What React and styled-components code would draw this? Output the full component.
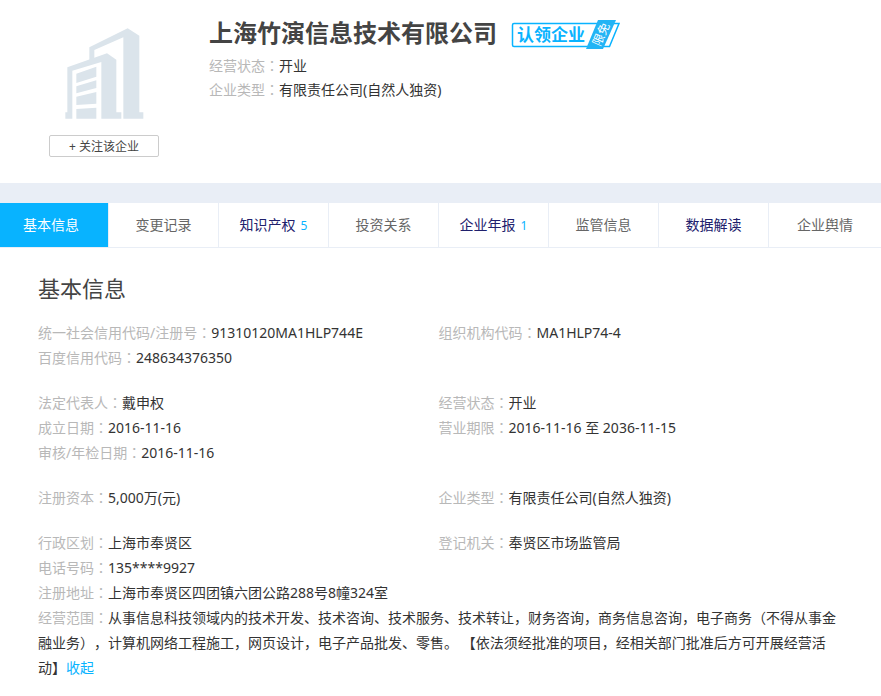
import React from "react";
import styled, { createGlobalStyle } from "styled-components";

const GlobalStyle = createGlobalStyle`
  * { box-sizing: border-box; }
  body {
    margin: 0;
    background: #fff;
    color: #333;
    font: 14px/25px "Noto Sans", "Noto Sans CJK SC", sans-serif;
    text-spacing-trim: space-all;
  }
  h1, h2, p, dl, dd, dt, ul { margin: 0; padding: 0; }
`;

const Header = styled.header`
  display: flex;
  gap: 50px;
  padding: 20px 40px 26px 49px;
`;

const LogoColumn = styled.div`
  display: flex;
  flex-direction: column;
  align-items: center;
  gap: 16px;
  width: 110px;
  padding-top: 8px;
`;

const FollowButton = styled.button`
  width: 100%;
  height: 22px;
  padding: 1px 0 0;
  border: 1px solid #ccc;
  border-radius: 2px;
  background: #fff;
  color: #444;
  font: inherit;
  font-size: 12px;
  line-height: 20px;
  cursor: pointer;
`;

const TitleRow = styled.div`
  display: flex;
  align-items: flex-start;
  gap: 13px;
  height: 30px;
  margin-bottom: 4px;
`;

const CompanyName = styled.h1`
  color: #444;
  font-size: 24px;
  line-height: 26px;
`;

const BadgeLink = styled.a`
  display: block;
  height: 30px;
`;

const Summary = styled.dl`
  line-height: 24px;
`;

const Field = styled.div`
  dt, dd { display: inline; }
`;

const Label = styled.dt`
  color: #b8b8b8;
`;

const Colon = styled.span`
  font-family: "Noto Sans CJK TC", sans-serif;
  line-height: 1;
`;

const Tabs = styled.nav`
  display: grid;
  grid-template-columns: 108fr repeat(6, 110fr) 113fr;
  border-top: 20px solid #e9eef6;
  border-bottom: 1px solid #e9eef6;
`;

const Tab = styled.a`
  height: 44px;
  padding-right: ${(p) => (p.$active ? "6px" : "0")};
  border-left: ${(p) => (p.$active ? "0" : "1px solid #e9eef6")};
  background: ${(p) => (p.$active ? "#08b3ff" : "#fff")};
  color: ${(p) => (p.$active ? "#fff" : p.$visitable ? "#20206c" : "#666")};
  line-height: 44px;
  text-align: center;
  text-decoration: none;
  white-space: nowrap;
`;

const Count = styled.span`
  margin-left: 5px;
  color: #08b3ff;
  font-size: 12px;
`;

const Details = styled.main`
  padding: 24px 42px 16px 38px;
`;

const SectionTitle = styled.h2`
  margin-bottom: 16px;
  color: #444;
  font-size: 22px;
  font-weight: 400;
  line-height: 32px;
`;

const Groups = styled.div`
  display: flex;
  flex-direction: column;
  gap: 20px;
`;

const Group = styled.dl`
  display: grid;
  grid-template-columns: 1fr 1fr;
`;

const Cell = styled(Field)`
  grid-column: ${(p) => (p.$wide ? "1 / -1" : p.$right ? "2" : "1")};
`;

const ToggleButton = styled.button`
  padding: 0;
  border: 0;
  background: none;
  color: #08b3ff;
  font: inherit;
  cursor: pointer;
`;

function BuildingLogo() {
  return (
    <svg width="79" height="91" viewBox="74 37 237 273" fill="#dbe4eb" aria-hidden="true">
      <path d="M147 95 262 38 297 60V290H309V309H249V65L162 103V128L147 134Z" />
      <path d="M75 290H81V155L200 113 228 132V290H243V309H183V139L96 165V309H75Z" />
      <path d="M108 174 168 153V183L108 202ZM108 212 168 194V217L108 233ZM108 243 168 229V264L108 268ZM108 280 168 276V309H108Z" />
    </svg>
  );
}

function ClaimBadge() {
  return (
    <svg width="110" height="30" viewBox="0 0 110 30" overflow="visible" role="img" aria-label="认领企业 限免">
      <path d="M4 3.5H109L99.500 26.500H4Q2.500 26.500 2.500 25V5Q2.500 3.500 4 3.500Z" fill="#fff" stroke="#08b3ff" strokeWidth="1.500" />
      <text x="7" y="21" fill="#08b3ff" fontSize="17" fontWeight="700" fontFamily="Noto Sans CJK SC">认领企业</text>
      <path d="M88 0H106L93 29H76Z" fill="#22b4f5" />
      <text transform="translate(90 27) rotate(-66)" fill="#fff" fontSize="12" fontFamily="Noto Sans CJK SC">限免</text>
    </svg>
  );
}

function Entry({ label, children, ...rest }) {
  return (
    <Cell {...rest}>
      <Label>{label}<Colon>：</Colon></Label>
      <dd>{children}</dd>
    </Cell>
  );
}

const tabs = [
  { name: "基本信息", active: true },
  { name: "变更记录" },
  { name: "知识产权", count: 5, visitable: true },
  { name: "投资关系" },
  { name: "企业年报", count: 1, visitable: true },
  { name: "监管信息" },
  { name: "数据解读", visitable: true },
  { name: "企业舆情" },
];

export default function App() {
  return (
    <>
      <GlobalStyle />
      <Header>
        <LogoColumn>
          <BuildingLogo />
          <FollowButton type="button">+ 关注该企业</FollowButton>
        </LogoColumn>
        <div>
          <TitleRow>
            <CompanyName>上海竹演信息技术有限公司</CompanyName>
            <BadgeLink href="#claim"><ClaimBadge /></BadgeLink>
          </TitleRow>
          <Summary>
            <Entry label="经营状态">开业</Entry>
            <Entry label="企业类型">有限责任公司(自然人独资)</Entry>
          </Summary>
        </div>
      </Header>
      <Tabs>
        {tabs.map((t) => (
          <Tab key={t.name} href={"#" + t.name} $active={t.active} $visitable={t.visitable}>
            {t.name}
            {t.count && <Count>{t.count}</Count>}
          </Tab>
        ))}
      </Tabs>
      <Details>
        <SectionTitle>基本信息</SectionTitle>
        <Groups>
          <Group>
            <Entry label="统一社会信用代码/注册号">91310120MA1HLP744E</Entry>
            <Entry label="组织机构代码" $right>MA1HLP74-4</Entry>
            <Entry label="百度信用代码">248634376350</Entry>
          </Group>
          <Group>
            <Entry label="法定代表人">戴申权</Entry>
            <Entry label="经营状态" $right>开业</Entry>
            <Entry label="成立日期">2016-11-16</Entry>
            <Entry label="营业期限" $right>2016-11-16 至 2036-11-15</Entry>
            <Entry label="审核/年检日期">2016-11-16</Entry>
          </Group>
          <Group>
            <Entry label="注册资本">5,000万(元)</Entry>
            <Entry label="企业类型" $right>有限责任公司(自然人独资)</Entry>
          </Group>
          <Group>
            <Entry label="行政区划">上海市奉贤区</Entry>
            <Entry label="登记机关" $right>奉贤区市场监管局</Entry>
            <Entry label="电话号码">135****9927</Entry>
            <Entry label="注册地址" $wide>上海市奉贤区四团镇六团公路288号8幢324室</Entry>
            <Entry label="经营范围" $wide>
              从事信息科技领域内的技术开发、技术咨询、技术服务、技术转让，财务咨询，商务信息咨询，电子商务（不得从事金融业务），计算机网络工程施工，网页设计，电子产品批发、零售。 【依法须经批准的项目，经相关部门批准后方可开展经营活动】
              <ToggleButton type="button">收起</ToggleButton>
            </Entry>
          </Group>
        </Groups>
      </Details>
    </>
  );
}
